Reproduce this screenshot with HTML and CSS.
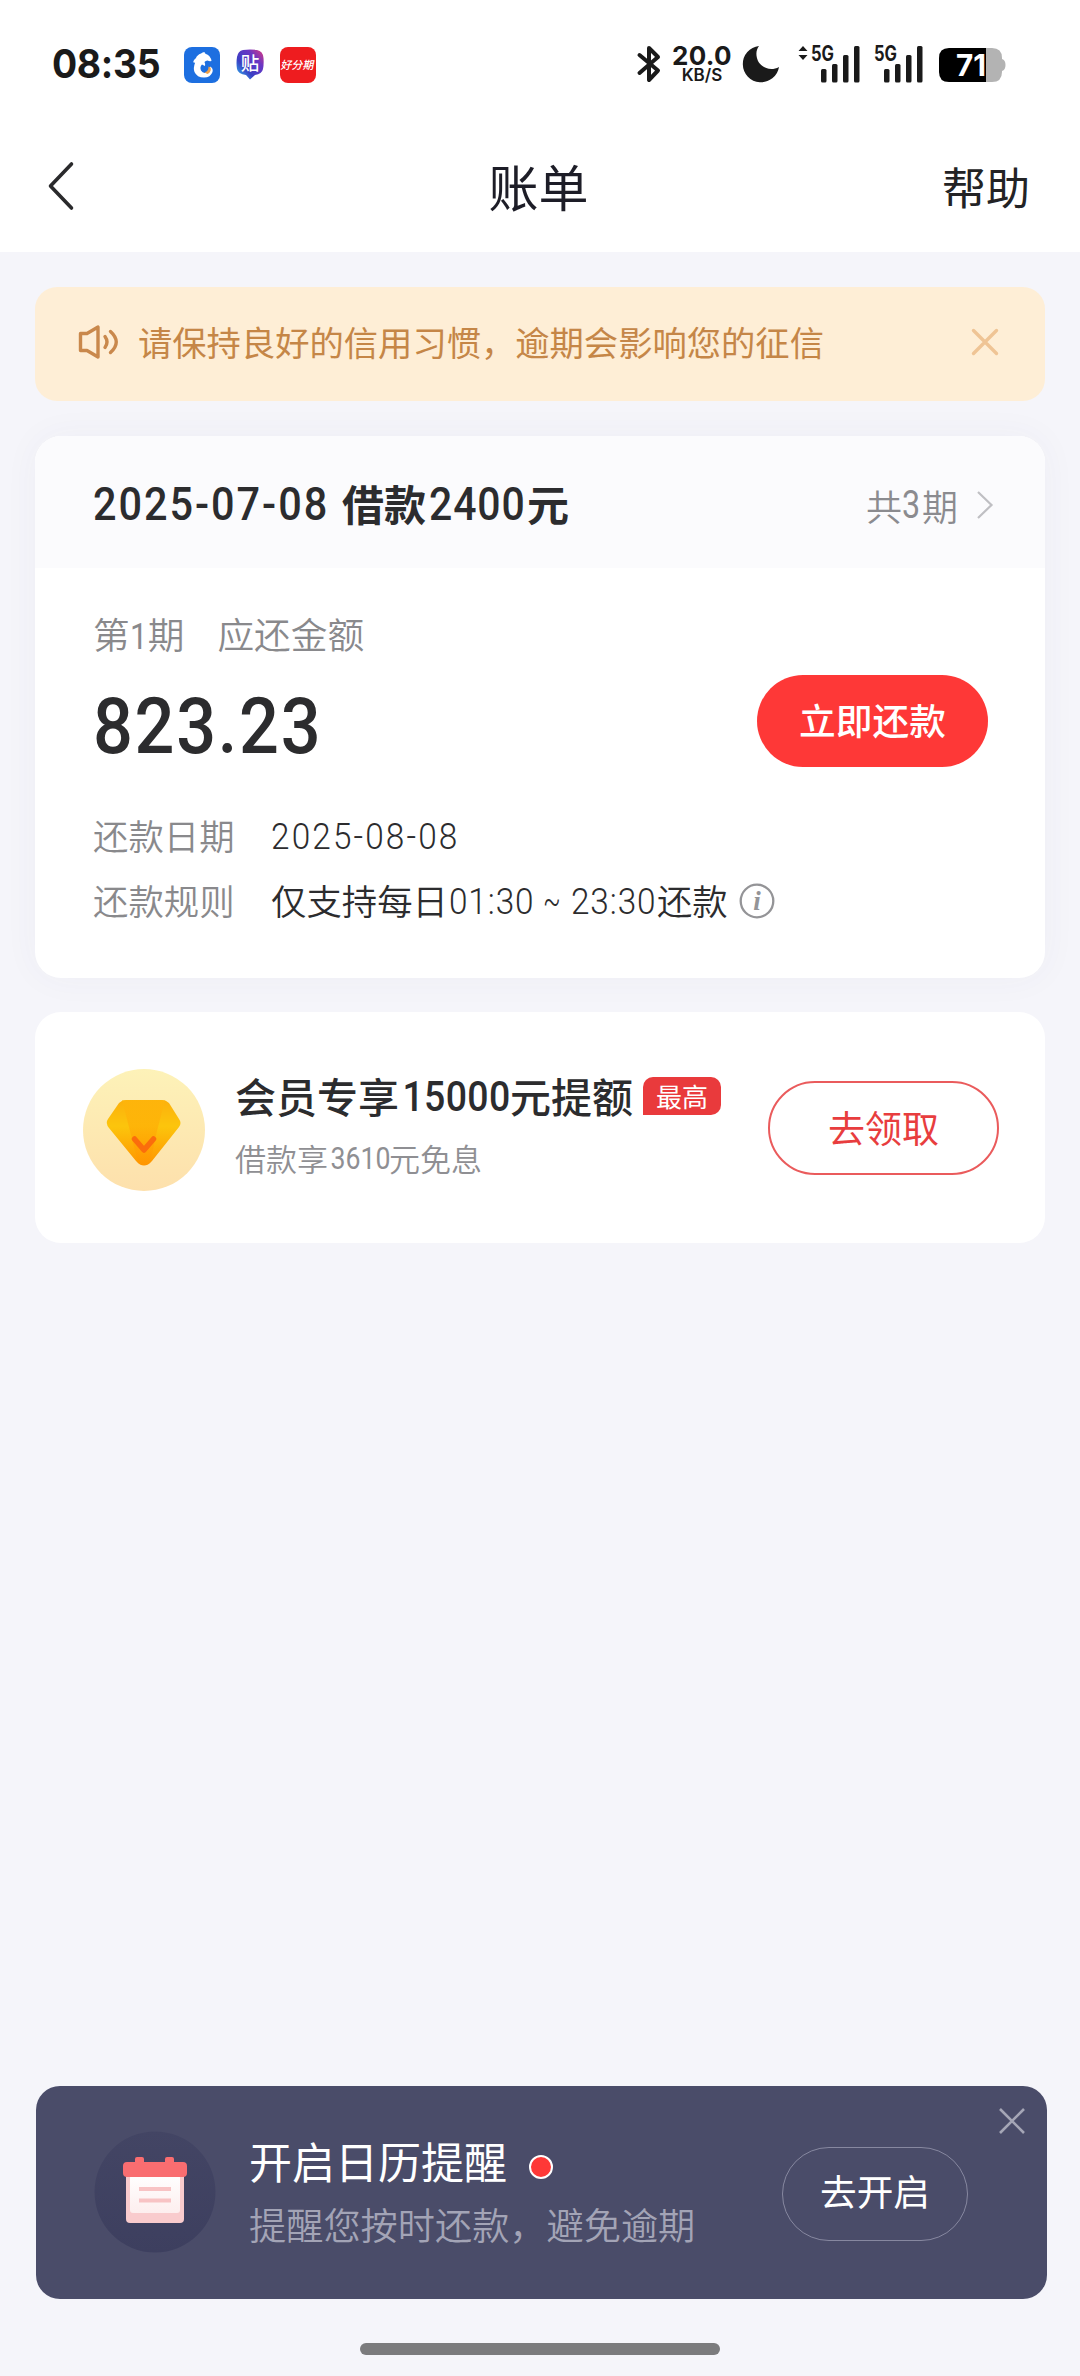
FILE: index.html
```html
<!DOCTYPE html>
<html lang="zh-CN">
<head>
<meta charset="utf-8">
<title>账单</title>
<link rel="stylesheet" href="styles.css">
</head>
<body>
<div class="page">
  <header class="top">
    <div class="status">
      <span class="clock">08:35</span>
      <svg class="app-dolphin" width="36" height="36" viewBox="0 0 36 36">
        <rect width="36" height="36" rx="8" fill="#1d6fe0"/>
        <path d="M9 15.500Q9.500 12.500 12 11Q13 8 17 6.500Q18.500 5 20.500 5Q20.500 6.500 22 7Q26.500 8.500 27.500 14Q25.500 14.500 23.500 13.500Q21.500 13.800 20.500 15Q21.500 17 21 19Q19.500 18 18 17.500Q15.500 20 17 23.500Q19 27 23 25.500Q26 24 26 19.500Q29.500 21 28.500 25Q26.500 30.500 20 30.500Q13 30.500 10.500 25Q9 21 11 16Q10 15 9 15.500Z" fill="#fff"/>
        <path d="M24.500 19.500L26.500 20.500C27.500 23 26 26 23.500 27L20.500 25.500C24 24.500 24.500 22 24.500 19.500Z" fill="#f0a24a"/>
      </svg>
      <svg class="app-tie" width="30" height="33" viewBox="0 0 30 33">
        <defs><linearGradient id="tie" x1="1" y1="0" x2="0" y2="1"><stop offset="0" stop-color="#e23a7c"/><stop offset=".3" stop-color="#6a36c4"/><stop offset=".65" stop-color="#3a3fc4"/><stop offset="1" stop-color="#30c8f4"/></linearGradient></defs>
        <path d="M8 2Q15 1 22 2Q28 3 28.500 10Q29 16 28 21Q27 26 20 27L15 31.500L11 27Q3 26 2 21Q1 15 2 9Q3 3 8 2Z" fill="url(#tie)"/>
        <text x="15" y="22" text-anchor="middle" class="tie-text">贴</text>
      </svg>
      <span class="app-hfq"><b>好分期</b></span>
      <span class="grow"></span>
      <svg class="bt" width="24" height="38" viewBox="0 0 24 38"><path d="M2.500 10L21 25.500L12 35V3L21 12L2.500 28" fill="none" stroke="#1a1a1a" stroke-width="4" stroke-linejoin="round" stroke-linecap="round"/></svg>
      <span class="speed"><b>20.0</b><i>KB/S</i></span>
      <svg class="moon" width="38" height="38" viewBox="0 0 38 38"><path d="M17 1A18.200 18.200 0 1 0 37 22C28 27 19 22 16 16C13.500 10 14 5 17 1Z" fill="#1a1a1a"/></svg>
      <svg class="sig" width="64" height="38" viewBox="0 0 64 38">
        <path d="M1.500 6L6 1L10.500 6ZM1.500 10L6 15L10.500 10Z" fill="#1a1a1a"/>
        <text x="14" y="16" class="g5" textLength="23" lengthAdjust="spacingAndGlyphs">5G</text>
        <g fill="#1a1a1a"><rect x="24" y="24" width="5.500" height="13.500" rx="1.500"/><rect x="35" y="19" width="5.500" height="18.500" rx="1.500"/><rect x="46" y="10" width="5.500" height="27.500" rx="1.500"/><rect x="57" y="1" width="5.500" height="36.500" rx="1.500"/></g>
      </svg>
      <svg class="sig2" width="50" height="38" viewBox="14 0 50 38">
        <text x="14" y="16" class="g5" textLength="23" lengthAdjust="spacingAndGlyphs">5G</text>
        <g fill="#1a1a1a"><rect x="24" y="24" width="5.500" height="13.500" rx="1.500"/><rect x="35" y="19" width="5.500" height="18.500" rx="1.500"/><rect x="46" y="10" width="5.500" height="27.500" rx="1.500"/><rect x="57" y="1" width="5.500" height="36.500" rx="1.500"/></g>
      </svg>
      <svg class="battery" width="67" height="34" viewBox="0 0 67 34">
        <path d="M47 0H53Q63 0 63 10V11Q66.500 12 66.500 17T63 23V24Q63 34 53 34H47Z" fill="#b3b3b3"/>
        <path d="M10 0H47V34H10Q0 34 0 24V10Q0 0 10 0Z" fill="#000"/>
        <text x="17" y="28" class="pct" textLength="30" lengthAdjust="spacingAndGlyphs">71</text>
      </svg>
    </div>
    <nav class="nav">
      <svg class="back" width="28" height="50" viewBox="0 0 28 50"><path d="M24.500 3L3.500 25L24.500 47" fill="none" stroke="#2a2a2c" stroke-width="3.600" stroke-linecap="round" stroke-linejoin="round"/></svg>
      <h1>账单</h1>
      <span class="help">帮助</span>
    </nav>
  </header>

  <main class="content">
    <section class="notice">
      <svg class="speaker" width="42" height="36" viewBox="0 0 42 36" fill="none" stroke="#c9884c" stroke-width="3.400" stroke-linejoin="round" stroke-linecap="round"><path d="M2.500 9.500H9L20 3V33L9 26.500H2.500Z"/><path d="M27 12.500Q31 18 27 23.500M32.500 7.500Q44 18 32.500 28.500"/></svg>
      <span class="notice-text">请保持良好的信用习惯，逾期会影响您的征信</span>
      <svg class="x-notice" width="28" height="28" viewBox="0 0 28 28"><path d="M2.500 2.500L25.500 25.500M25.500 2.500L2.500 25.500" stroke="#efc495" stroke-width="3.400" stroke-linecap="round"/></svg>
    </section>

    <section class="card bill">
      <div class="bill-head">
        <div class="bill-title"><span class="num t-date">2025-07-08</span><b>借款</b><span class="num t-sum">2400</span><b>元</b></div>
        <div class="periods">共<span class="num p-three">3</span>期</div>
        <svg class="chev" width="18" height="30" viewBox="0 0 18 30"><path d="M2 2L15.500 15L2 28" fill="none" stroke="#bfbfc3" stroke-width="2.200"/></svg>
      </div>
      <div class="bill-body">
        <div class="due-label"><span>第<span class="num d-one">1</span>期</span><span>应还金额</span></div>
        <div class="due-row"><span class="num amount">823.23</span><span class="pay">立即还款</span></div>
        <div class="info"><span class="key">还款日期</span><span class="num i-date">2025-08-08</span></div>
        <div class="info rule"><span class="key">还款规则</span><span>仅支持每日</span><span class="num i-t1">01:30</span><span class="num i-tilde">~</span><span class="num i-t2">23:30</span><span>还款</span>
          <svg class="inf" width="36" height="36" viewBox="0 0 36 36"><circle cx="18" cy="18" r="16.300" fill="none" stroke="#949497" stroke-width="2.300"/><text x="18" y="27" text-anchor="middle" class="inf-i">i</text></svg>
        </div>
      </div>
    </section>

    <section class="card member">
      <svg class="gem" width="122" height="122" viewBox="0 0 122 122">
        <defs>
          <linearGradient id="disc" x1="0" y1="0" x2="0" y2="1"><stop offset="0" stop-color="#fdf2b8"/><stop offset="1" stop-color="#fde0ac"/></linearGradient>
          <linearGradient id="gold" x1="0" y1="0" x2="0" y2="1"><stop offset="0" stop-color="#fcb00c"/><stop offset=".4" stop-color="#fcc50c"/><stop offset="1" stop-color="#ff9400"/></linearGradient>
          <linearGradient id="mid" x1="0" y1="0" x2="0" y2="1"><stop offset="0" stop-color="#ffb70a"/><stop offset="1" stop-color="#ff9600"/></linearGradient>
        </defs>
        <circle cx="61" cy="61" r="61" fill="url(#disc)"/>
        <path d="M43 31H79Q83 31 86 34L96 50Q99 54 96 58L69 92Q61 101 53 92L26 59Q22 54 25 50L36 34Q39 31 43 31Z" fill="url(#gold)"/>
        <path d="M39 31H82L74 62L67 94Q61 98 55 94L47 62Z" fill="url(#mid)" opacity=".6"/>
        <path d="M51.500 70L61 81L70.500 70" fill="none" stroke="#fb6d0c" stroke-width="5.500" stroke-linecap="round" stroke-linejoin="round"/>
      </svg>
      <div class="member-text">
        <div class="member-title">会员专享<span class="num m-sum">15000</span>元提额<span class="badge">最高</span></div>
        <div class="member-sub">借款享<span class="num s-sum">3610</span>元免息</div>
      </div>
      <span class="claim">去领取</span>
    </section>
  </main>

  <section class="remind">
    <svg class="cal" width="122" height="122" viewBox="0 0 122 122">
      <defs>
        <linearGradient id="night" x1="0" y1="0" x2="0" y2="1"><stop offset="0" stop-color="#434564"/><stop offset="1" stop-color="#3d3f5f"/></linearGradient>
        <linearGradient id="sheet" x1="0" y1="0" x2="0" y2="1"><stop offset="0" stop-color="#fff"/><stop offset="1" stop-color="#fdeeee"/></linearGradient>
      </defs>
      <circle cx="61" cy="61" r="60.500" fill="url(#night)"/>
      <rect x="32" y="34" width="58" height="58" rx="4" fill="#f9cbcd"/>
      <rect x="36" y="44" width="50" height="38" rx="3" fill="url(#sheet)"/>
      <path d="M41 31V28Q41 26 43 26H48Q50 26 50 28V31H71V28Q71 26 73 26H78Q80 26 80 28V31H89Q93 31 93 35V42Q93 46 89 46H33Q29 46 29 42V35Q29 31 33 31Z" fill="#f96d70"/>
      <path d="M45 58H77M45 69.500H77" stroke="#f8c3c4" stroke-width="4.200"/>
    </svg>
    <div class="remind-text">
      <div class="remind-title">开启日历提醒<span class="dot"></span></div>
      <div class="remind-sub">提醒您按时还款，避免逾期</div>
    </div>
    <span class="open">去开启</span>
    <svg class="x-remind" width="28" height="28" viewBox="0 0 28 28"><path d="M2 2L26 26M26 2L2 26" stroke="#a5a6b6" stroke-width="2.600"/></svg>
  </section>
  <div class="home"></div>
</div>
</body>
</html>
```
FILE: styles.css
```css
* { box-sizing: border-box; }
body { margin: 0; }
.page {
  width: 1080px;
  height: 2376px;
  display: flex;
  flex-direction: column;
  background: #f5f5fa;
  color: #2c2c2e;
  font-family: "Noto Sans CJK SC", sans-serif;
  white-space: nowrap;
}
svg { display: block; flex: none; overflow: visible; }
.num {
  display: inline-block;
  font-family: Roboto, sans-serif;
  transform-origin: 0 50%;
  flex: none;
}

/* status bar and navigation */
.top { height: 252px; background: #fff; }
.status { display: flex; align-items: flex-start; height: 130px; padding: 45px 0 0 52px; }
.clock {
  width: 132px;
  font: 650 40px/38px Inter, sans-serif;
  letter-spacing: -0.4px;
  color: #1a1a1a;
  transform: scaleX(.935);
  transform-origin: 0 50%;
}
.app-dolphin { margin-top: 2px; }
.app-tie { margin: 3px 0 0 15px; }
.tie-text { font: 500 18.5px "Noto Sans CJK SC", sans-serif; fill: #fff; }
.app-hfq {
  width: 36px;
  height: 36px;
  margin: 2px 0 0 15px;
  border-radius: 8px;
  background: #ee1c1f;
  color: #fff;
  text-align: center;
}
.app-hfq b {
  display: block;
  width: 36px;
  font-size: 11px;
  font-weight: 500;
  line-height: 35px;
  transform: skewX(-12deg);
}
.grow { width: 320px; }
.bt { margin-left: 1px; }
.speed { width: 60px; margin-left: 11px; text-align: center; color: #1a1a1a; }
.speed b { display: block; font: 650 26px/22px Inter, sans-serif; letter-spacing: 0.3px; }
.speed i { display: block; font: 600 17px/17px Inter, sans-serif; }
.moon { margin-left: 10px; }
.sig { margin-left: 17px; }
.sig2 { margin-left: 13px; }
.g5 { font: 700 21px Inter, sans-serif; fill: #1a1a1a; }
.battery { margin: 3px 0 0 15px; }
.pct { font: 700 30px Inter, sans-serif; fill: #fff; }

.nav {
  display: grid;
  grid-template-columns: 1fr auto 1fr;
  align-items: center;
  height: 114px;
  padding: 0 50px 2px 47px;
}
.nav h1 { margin: 0; font-size: 50px; font-weight: 400; line-height: 66px; padding-bottom: 3px; color: #1d1d27; }
.help { justify-self: end; font-size: 44px; line-height: 64px; color: #232325; }

/* content */
.content { padding: 35px 35px 0; }
.notice {
  display: flex;
  align-items: center;
  height: 114px;
  padding: 0 46px 4px 43px;
  border-radius: 22px;
  background: #feeed6;
}
.notice-text { margin-left: 18px; padding-bottom: 2px; font-size: 34.3px; color: #c58647; flex: 1; }

.card { border-radius: 26px; background: #fff; }
.bill {
  height: 542px;
  margin-top: 35px;
  overflow: hidden;
  box-shadow: 0 0 36px rgba(60, 60, 110, .045);
}
.bill-head {
  display: flex;
  align-items: center;
  height: 132px;
  padding: 0 51px 0 58px;
  background: #fbfbfd;
}
.bill-title { display: flex; flex: 1; font-size: 42px; line-height: 60px; padding-top: 3px; }
.bill-title b { margin-top: -1px; }
.bill-title .num { font-size: 46px; font-weight: 500; }
.t-date { width: 249px; letter-spacing: 2.2px; transform: scaleX(.9); }
.t-sum { width: 98px; margin-left: 3px; letter-spacing: 1px; transform: scaleX(.89); }
.periods { display: flex; margin: 6px 18px 0 0; font-size: 36px; line-height: 52px; color: #8b8b8f; font-weight: 350; }
.p-three { width: 20px; font-size: 38px; font-weight: 400; transform: scaleX(.85); }
.chev { margin-top: 5px; }
.bill-body { padding: 0 57px 0 58px; }
.due-label { display: flex; gap: 33px; padding-top: 39px; font-size: 36.7px; font-weight: 350; line-height: 52px; color: #89898c; }
.d-one { width: 18px; font-weight: 400; transform: scaleX(.85); }
.due-row { display: flex; justify-content: space-between; align-items: center; height: 92px; margin-top: 12px; }
.amount { margin-top: 12px; width: 230px; font-size: 78px; font-weight: 500; line-height: 92px; letter-spacing: 1.9px; transform: scaleX(.9); }
.pay {
  width: 231px;
  height: 92px;
  border-radius: 46px;
  background: #fe3837;
  color: #fff;
  font-size: 36.7px;
  font-weight: 500;
  line-height: 88px;
  text-align: center;
}
.info { display: flex; height: 65px; font-size: 35.4px; font-weight: 350; line-height: 65px; color: #2c2c2e; }
.info:nth-child(3) { margin-top: 35px; }
.key { width: 178px; color: #89898c; }
.info .num { padding-top: 2px; font-size: 37px; }
.i-date { letter-spacing: 2.4px; transform: scaleX(.9); }
.i-t1, .i-t2 { width: 84px; letter-spacing: 1px; transform: scaleX(.9); }
.i-t1 { margin-left: 1px; }
.i-tilde { width: 28px; margin-left: 10px; transform: scaleX(.7); }
.i-t2 { width: 86px; }
.inf { margin: 16px 0 0 11px; }
.inf-i { font: italic 700 27px "Liberation Serif", serif; fill: #949497; }

.member { display: flex; height: 231px; margin-top: 34px; padding-left: 48px; }
.gem { margin-top: 57px; }
.member-text { width: 563px; padding: 51px 0 0 30px; }
.member-title { display: flex; font-size: 41px; font-weight: 500; line-height: 64px; }
.m-sum { width: 111px; padding-left: 4px; font-size: 43px; letter-spacing: .4px; line-height: 67px; transform: scaleX(.87); }
.badge {
  width: 78px;
  height: 38px;
  margin: 14px 0 0 10px;
  border-radius: 10px 10px 10px 0;
  background: #e93a3c;
  color: #fff;
  font-size: 26px;
  font-weight: 400;
  line-height: 37px;
  text-align: center;
}
.member-sub { display: flex; margin-top: 5px; font-size: 31px; font-weight: 350; line-height: 46px; color: #8f8f93; }
.s-sum { width: 61px; padding-left: 3px; font-weight: 400; line-height: 48px; transform: scaleX(.86); }
.claim {
  width: 231px;
  height: 94px;
  margin-top: 69px;
  border: 2px solid #ea5b5c;
  border-radius: 47px;
  color: #e83d3e;
  font-size: 37px;
  line-height: 88px;
  text-align: center;
}

/* reminder bar */
.remind {
  position: relative;
  display: flex;
  width: 1011px;
  height: 213px;
  margin: 843px 0 0 36px;
  padding-left: 58px;
  border-radius: 24px;
  background: #4a4c69;
  color: #fff;
}
.cal { margin-top: 45px; }
.remind-text { width: 566px; padding: 43px 0 0 33px; }
.remind-title { display: flex; align-items: center; font-size: 43px; line-height: 62px; }
.dot { width: 24px; height: 24px; margin: 14px 0 0 22px; border: 2px solid #fff; border-radius: 50%; background: #fe3837; }
.remind-sub { margin-top: 6px; font-size: 37.2px; font-weight: 350; line-height: 54px; color: #a3a4b6; }
.open {
  width: 186px;
  height: 94px;
  margin-top: 61px;
  border: 1px solid #8788a0;
  border-radius: 47px;
  font-size: 36.7px;
  line-height: 84px;
  text-align: center;
}
.x-remind { position: absolute; top: 21px; right: 21px; }
.home { width: 360px; height: 12px; margin: 44px auto 0; border-radius: 6px; background: #7b7b7d; }
```
